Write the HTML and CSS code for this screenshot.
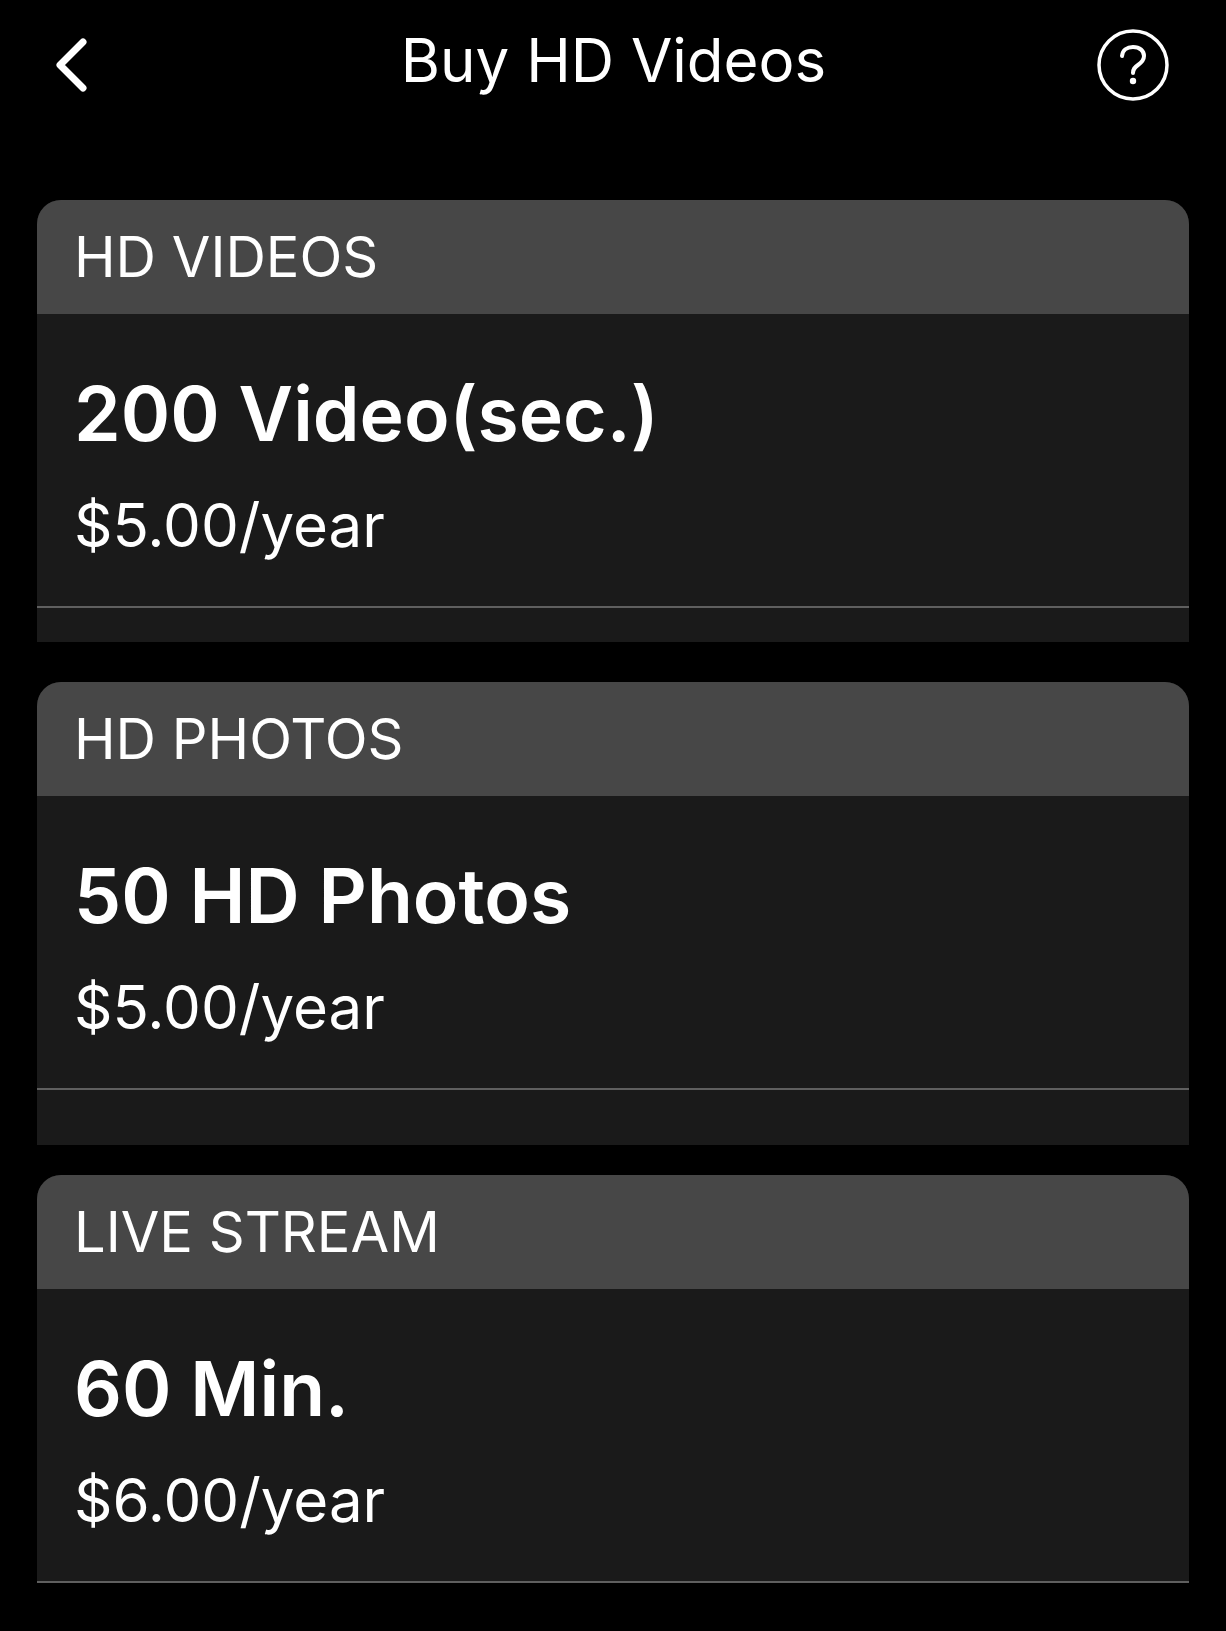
FILE: index.html
```html
<!DOCTYPE html>
<html lang="en">
<head>
    <meta charset="UTF-8">
    <meta name="viewport" content="width=device-width, initial-scale=1.0">
    <title>Buy HD Videos</title>
    <link rel="stylesheet" href="styles.css">
</head>
<body>
    <header class="topbar">
        <svg class="back-icon" width="34" height="54" viewBox="0 0 34 54" fill="none">
            <path d="M29 4 L6 27 L29 50" stroke="#fff" stroke-width="7" stroke-linecap="round" stroke-linejoin="round"/>
        </svg>
        <h1 class="title">Buy HD Videos</h1>
        <svg class="help-icon" width="72" height="72" viewBox="0 0 72 72" fill="none">
            <circle cx="36" cy="36" r="34" stroke="#fff" stroke-width="3.500"/>
            <path d="M25 27 C25.500 21 30 18 36 18 C43 18 47 22 47 27 C47 31 44.500 33.500 41 36 C37.500 38.500 36 40 36 44" stroke="#fff" stroke-width="4" stroke-linecap="round"/>
            <circle cx="36" cy="52" r="3.200" fill="#fff"/>
        </svg>
    </header>

    <section class="card card-videos">
        <h2 class="card-head">HD VIDEOS</h2>
        <div class="plan">
            <div class="plan-name">200 Video(sec.)</div>
            <div class="plan-price">$5.00/year</div>
        </div>
    </section>

    <section class="card card-photos">
        <h2 class="card-head">HD PHOTOS</h2>
        <div class="plan">
            <div class="plan-name">50 HD Photos</div>
            <div class="plan-price">$5.00/year</div>
        </div>
    </section>

    <section class="card card-stream">
        <h2 class="card-head">LIVE STREAM</h2>
        <div class="plan">
            <div class="plan-name">60 Min.</div>
            <div class="plan-price">$6.00/year</div>
        </div>
    </section>
</body>
</html>
```

FILE: styles.css
```css
html, body {
    margin: 0;
    padding: 0;
}
body {
    width: 1226px;
    height: 1631px;
    overflow: hidden;
    background: #000;
    color: #fff;
    font-family: Inter, "Liberation Sans", sans-serif;
    -webkit-font-smoothing: antialiased;
}
.topbar {
    display: grid;
    grid-template-columns: 1fr auto 1fr;
    align-items: center;
    height: 130px;
    padding: 0 57px 0 54px;
    margin-bottom: 70px;
}
.back-icon {
    display: block;
}
.title {
    margin: 0 0 10px 4px;
    font-size: 60px;
    font-weight: 400;
}
.help-icon {
    display: block;
    justify-self: end;
}
.card {
    margin: 0 37px;
    background: #1a1a1a;
    border-radius: 24px 24px 0 0;
    overflow: hidden;
}
.card-videos {
    margin-bottom: 40px;
    padding-bottom: 34px;
}
.card-photos {
    margin-bottom: 30px;
    padding-bottom: 55px;
}
.card-head {
    margin: 0;
    height: 114px;
    padding: 0 39px 0 37px;
    display: flex;
    align-items: center;
    background: #474747;
    font-size: 56px;
    font-weight: 400;
}
.plan {
    box-sizing: border-box;
    height: 294px;
    padding: 55px 39px 0 37px;
    border-bottom: 2px solid #5f5f5f;
}
.plan-name {
    font-size: 75px;
    font-weight: 600;
    line-height: 90px;
}
.plan-price {
    margin-top: 31px;
    font-size: 60px;
    line-height: 70px;
}
```
